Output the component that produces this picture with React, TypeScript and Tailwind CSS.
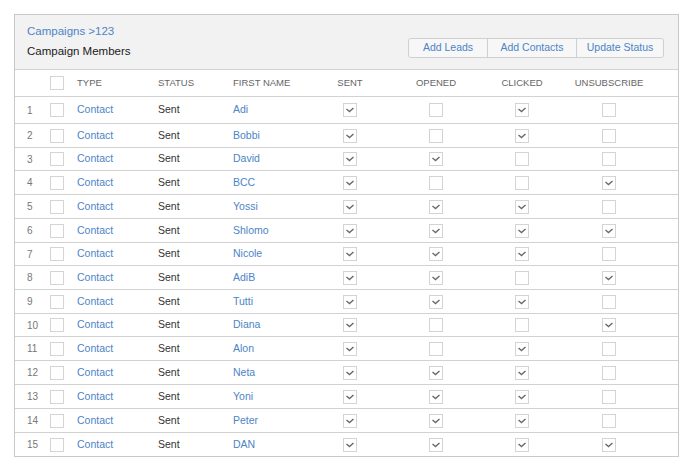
import React from 'react';

type Member = {
  name: string;
  sent: boolean;
  opened: boolean;
  clicked: boolean;
  unsubscribe: boolean;
  h: string;
};

const members: Member[] = [
  { name: 'Adi', sent: true, opened: false, clicked: true, unsubscribe: false, h: 'h-[27px]' },
  { name: 'Bobbi', sent: true, opened: false, clicked: true, unsubscribe: false, h: 'h-[24px]' },
  { name: 'David', sent: true, opened: true, clicked: false, unsubscribe: false, h: 'h-[23px]' },
  { name: 'BCC', sent: true, opened: false, clicked: false, unsubscribe: true, h: 'h-[24px]' },
  { name: 'Yossi', sent: true, opened: true, clicked: true, unsubscribe: false, h: 'h-[24px]' },
  { name: 'Shlomo', sent: true, opened: true, clicked: true, unsubscribe: true, h: 'h-[24px]' },
  { name: 'Nicole', sent: true, opened: true, clicked: true, unsubscribe: false, h: 'h-[23px]' },
  { name: 'AdiB', sent: true, opened: true, clicked: false, unsubscribe: true, h: 'h-[24px]' },
  { name: 'Tutti', sent: true, opened: true, clicked: true, unsubscribe: false, h: 'h-[24px]' },
  { name: 'Diana', sent: true, opened: false, clicked: false, unsubscribe: true, h: 'h-[23px]' },
  { name: 'Alon', sent: true, opened: false, clicked: true, unsubscribe: false, h: 'h-[24px]' },
  { name: 'Neta', sent: true, opened: true, clicked: true, unsubscribe: false, h: 'h-[24px]' },
  { name: 'Yoni', sent: true, opened: true, clicked: true, unsubscribe: false, h: 'h-[24px]' },
  { name: 'Peter', sent: true, opened: true, clicked: true, unsubscribe: false, h: 'h-[24px]' },
  { name: 'DAN', sent: true, opened: true, clicked: true, unsubscribe: true, h: 'h-[23px]' },
];

const grid =
  'grid grid-cols-[35px_27px_81px_75px_73px_88px_84px_88px_86px_1fr] items-center';

/**
 * Small square checkbox, optionally with a grey tick
 */
const Box: React.FC<{ checked?: boolean }> = ({ checked }) => (
  <span className="block h-[14px] w-[14px] border border-[#d4d4d4] bg-white">
    {checked && (
      <svg width="12" height="12" viewBox="0 0 12 12" className="block">
        <polyline
          points="2.5,5 5.5,7.5 9.5,4"
          fill="none"
          stroke="#6a6a6a"
          strokeWidth="1.4"
        />
      </svg>
    )}
  </span>
);

const App: React.FC = () => {
  return (
    <div className="min-h-[471px] bg-white pl-[14px] pt-[14px] font-['Liberation_Sans',Arial,sans-serif]">
      <div className="w-[665px] border border-[#c9c9c9]">
        {/* Header */}
        <div className="flex h-[55px] justify-between border-b border-[#d2d2d2] bg-[#f2f2f2]">
          <div className="pl-[12px] pt-[9px]">
            <div className="text-[11.5px] leading-[14px] text-[#4d84c6]">Campaigns &gt;123</div>
            <div className="mt-[6px] text-[11.5px] leading-[14px] text-[#1a1a1a]">Campaign Members</div>
          </div>
          <div className="pr-[14px] pt-[23px]">
            <div className="flex h-[20px] overflow-hidden rounded-[3px] border border-[#d0d0d0] bg-[#f7f7f7] text-[10.5px] text-[#4d84c6]">
              <button className="w-[79px] border-r border-[#d0d0d0]">Add Leads</button>
              <button className="w-[89px] border-r border-[#d0d0d0]">Add Contacts</button>
              <button className="w-[86px]">Update Status</button>
            </div>
          </div>
        </div>

        {/* Column headings */}
        <div className={`${grid} h-[27px] border-b border-[#d2d2d2] text-[9.5px] text-[#666]`}>
          <span />
          <span><Box /></span>
          <span>TYPE</span>
          <span>STATUS</span>
          <span>FIRST NAME</span>
          <span className="text-center">SENT</span>
          <span className="text-center">OPENED</span>
          <span className="text-center">CLICKED</span>
          <span className="text-center">UNSUBSCRIBE</span>
          <span />
        </div>

        {/* Rows */}
        {members.map((m, i) => (
          <div
            key={m.name}
            className={`${grid} ${m.h} ${i < members.length - 1 ? 'border-b border-[#d2d2d2]' : ''} text-[10.5px]`}
          >
            <span className="pl-[12px] text-[10px] text-[#777]">{i + 1}</span>
            <span><Box /></span>
            <span className="text-[#4d84c6]">Contact</span>
            <span className="text-[#333]">Sent</span>
            <span className="text-[#4d84c6]">{m.name}</span>
            <span className="flex justify-center"><Box checked={m.sent} /></span>
            <span className="flex justify-center"><Box checked={m.opened} /></span>
            <span className="flex justify-center"><Box checked={m.clicked} /></span>
            <span className="flex justify-center"><Box checked={m.unsubscribe} /></span>
            <span />
          </div>
        ))}
      </div>
    </div>
  );
};

export default App;
